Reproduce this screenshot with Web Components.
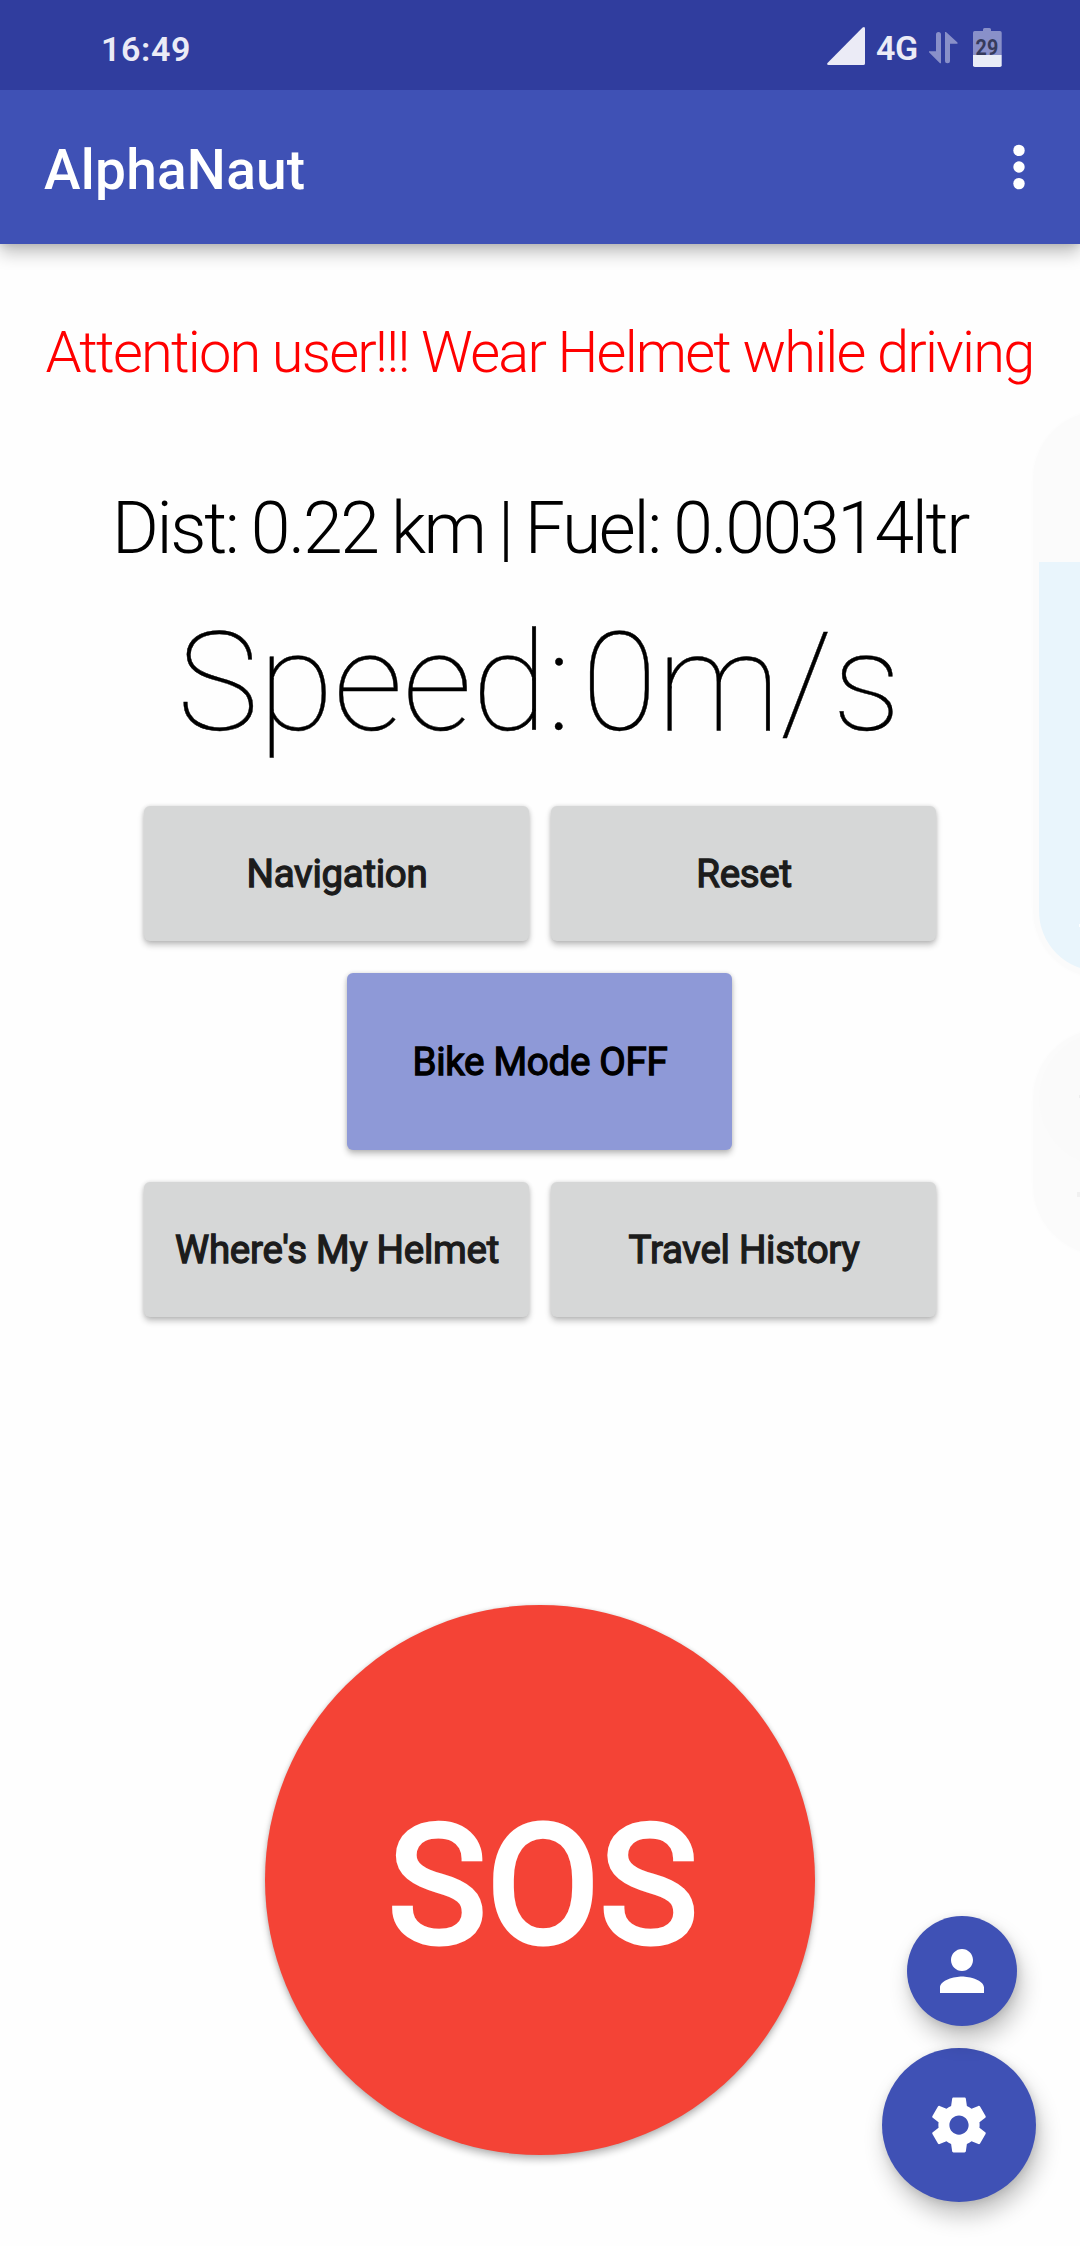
<!DOCTYPE html>
<html lang="en">
<head>
<meta charset="utf-8">
<title>AlphaNaut</title>
<style>
html,body{margin:0;padding:0}
body{background:#fefefe;font-family:Roboto,"Liberation Sans",sans-serif}
</style>
</head>
<body>
<alpha-app></alpha-app>

<template id="status-bar">
<style>
:host{display:flex;position:relative;z-index:1;align-items:flex-start;justify-content:space-between;box-sizing:border-box;height:90px;padding:0 78px 0 101px;background:#303d9e;color:#ebebf6;font-weight:600;font-size:34px;line-height:40px}
.time{padding-top:28.5px;letter-spacing:.6px}
.right{display:flex;align-items:flex-start}
.net{padding-top:28px;margin-left:11px;letter-spacing:-.3px}
svg{display:block}
.signal{margin-top:27px}
.arrows{margin:32px 0 0 11px}
.battery{margin:28px 0 0 15px}
</style>
<span class="time">16:49</span>
<span class="right">
<svg class="signal" width="38" height="38" viewBox="0 0 38 38"><path fill="#ebebf6" d="M38 1.6V36.4Q38 38 36.4 38H1.6Q-.6 38 .5 36L35.6.6Q38-.8 38 1.6Z"/></svg>
<span class="net">4G</span>
<svg class="arrows" width="29" height="32" viewBox="0 0 29 32"><path fill="#8990c9" d="M7 2.5Q7 0 9.5 0T12 2.5V31.2H11L0 20.3V19.3H7Z"/><path fill="#8990c9" d="M16 0H17L28.5 10.5V11.7H21V28.7Q21 31.2 18.5 31.2T16 28.7Z"/></svg>
<svg class="battery" width="29" height="39" viewBox="0 0 29 39"><path fill="#8990c9" d="M10 3V1.5Q10 0 11.5 0H16.5Q18 0 18 1.5V3H27Q28.7 3 28.7 4.7V27H0V4.7Q0 3 1.7 3Z"/><path fill="#e9edf7" d="M0 27H28.7V37.2Q28.7 39 26.9 39H1.8Q0 39 0 37.2Z"/><text x="2.6" y="27" textLength="22.6" lengthAdjust="spacingAndGlyphs" font-family="Roboto" font-size="22" font-weight="700" fill="#363b5c">29</text></svg>
</span>
</template>

<template id="app-toolbar">
<style>
:host{display:flex;position:relative;align-items:center;justify-content:space-between;box-sizing:border-box;height:154px;padding:0 55px 0 44px;background:#3f51b5;color:#fff;box-shadow:0 9px 16px rgba(0,0,0,.24),0 1px 8px rgba(0,0,0,.12)}
h1{margin:5px 0 0;font-size:55px;font-weight:500;line-height:64px;letter-spacing:.25px}
svg{display:block}
</style>
<h1><slot></slot></h1>
<svg width="12" height="46" viewBox="0 0 12 46" fill="#fff"><circle cx="6" cy="6.4" r="5.7"/><circle cx="6" cy="23" r="5.7"/><circle cx="6" cy="39.6" r="5.7"/></svg>
</template>

<template id="action-button">
<style>
:host{display:flex;align-items:center;justify-content:center;box-sizing:border-box;width:385px;height:135px;padding:2px 0 0 1px;border-radius:6px;background:#d6d7d7;color:#1c1c1c;font-size:38.5px;line-height:48px;white-space:nowrap;letter-spacing:-.28px;-webkit-text-stroke:1.3px currentColor;box-shadow:0 4px 6px rgba(0,0,0,.24),0 0 4px rgba(0,0,0,.12)}
:host([mode]){height:177px;margin-right:1px;background:#8e99d7;color:#000}
</style>
<slot></slot>
</template>

<template id="sos-button">
<style>
:host{display:flex;align-items:center;justify-content:center;box-sizing:border-box;width:550px;height:550px;padding:12px 0 0 6px;border-radius:50%;background:#f44336;color:#fff;font-size:165px;line-height:194px;-webkit-text-stroke:5.2px #fff;box-shadow:0 5px 7px rgba(0,0,0,.24),0 0 4px rgba(0,0,0,.12)}
</style>
<slot></slot>
</template>

<template id="round-fab">
<style>
:host{display:flex;align-items:center;justify-content:center;position:relative;width:154px;height:154px;border-radius:50%;background:#3f51b5;box-shadow:4px 14px 22px rgba(0,0,0,.23),1px 2px 8px rgba(0,0,0,.12)}
:host([mini]){width:110px;height:110px;z-index:1}
</style>
<slot></slot>
</template>

<template id="edge-panel">
<style>
:host{position:absolute;top:404px;right:0;width:55px;height:860px;overflow:hidden}
div{position:absolute;box-sizing:border-box}
.volume{left:8px;top:7px;width:140px;height:567px;border-radius:68px;background:#fbfbfb;box-shadow:0 0 4px #fcfcfc}
.level{left:14px;top:158px;width:126px;height:409px;border-radius:0 0 60px 60px;background:#e9f5fc}
.tools{left:8px;top:625px;width:150px;height:226px;border-radius:70px;background:#fbfbfb;box-shadow:0 0 4px #fcfcfc}
.knob{left:14px;top:628px;width:134px;height:134px;border-radius:50%;background:#fafafa}
.dot{right:0;width:1px;height:3px}
</style>
<div class="volume"></div><div class="level"></div><div class="dot" style="top:520px;background:#fff"></div>
<div class="tools"></div><div class="knob"></div>
<div class="dot" style="top:691px;background:#eee"></div><div class="dot" style="top:788px;width:3px;height:5px;background:#f1f1f1"></div>
</template>

<template id="alpha-app">
<style>
:host{display:flex;flex-direction:column;position:relative;width:1080px;height:2246px;overflow:hidden;background:#fefefe}
main{display:flex;flex-direction:column;align-items:center;padding-top:74px}
p{margin:0;white-space:pre;color:#000}
.warn{margin-right:1px;font-size:57.75px;font-weight:300;line-height:68px;letter-spacing:-1.78px;color:#f00}
.trip{margin:100.6px 0 0 0;font-size:71.5px;font-weight:300;line-height:84px;letter-spacing:-2.35px;word-spacing:-1.7px}
.speed{margin:32.4px 2px 0 0;font-size:137.5px;font-weight:100;line-height:160px;letter-spacing:-.1px;word-spacing:-22.5px;-webkit-text-stroke:.4px #000}
.grid{display:flex;flex-direction:column;align-items:center;gap:32px;margin-top:43px}
.row{display:flex;gap:22px}
sos-button{margin-top:288px}
.fabs{position:absolute;right:44px;bottom:44px;display:flex;flex-direction:column;align-items:center;gap:22px}
.fabs round-fab[mini]{margin-left:6px}
</style>
<status-bar></status-bar>
<app-toolbar>AlphaNaut</app-toolbar>
<main>
<p class="warn">Attention user!!! Wear Helmet while driving</p>
<p class="trip">Dist: 0.22 km | Fuel: 0.00314ltr</p>
<p class="speed">Speed: 0m/s</p>
<div class="grid">
<div class="row"><action-button>Navigation</action-button><action-button>Reset</action-button></div>
<action-button mode>Bike Mode OFF</action-button>
<div class="row"><action-button>Where's My Helmet</action-button><action-button>Travel History</action-button></div>
</div>
<sos-button>SOS</sos-button>
</main>
<edge-panel></edge-panel>
<div class="fabs">
<round-fab mini><svg width="66" height="66" viewBox="0 0 24 24" fill="#fff"><path d="M12 12c2.21 0 4-1.79 4-4s-1.79-4-4-4-4 1.79-4 4 1.79 4 4 4zm0 2c-2.67 0-8 1.34-8 4v2h16v-2c0-2.66-5.33-4-8-4z"/></svg></round-fab>
<round-fab><svg width="66" height="66" viewBox="0 0 24 24" fill="#fff"><path d="M19.43 12.98c.04-.32.07-.64.07-.98s-.03-.66-.07-.98l2.11-1.65c.19-.15.24-.42.12-.64l-2-3.46c-.12-.22-.39-.3-.61-.22l-2.49 1c-.52-.4-1.08-.73-1.69-.98l-.38-2.65C14.46 2.18 14.25 2 14 2h-4c-.25 0-.46.18-.49.42l-.38 2.65c-.61.25-1.17.59-1.69.98l-2.49-1c-.23-.09-.49 0-.61.22l-2 3.46c-.13.22-.07.49.12.64l2.11 1.65c-.04.32-.07.65-.07.98s.03.66.07.98l-2.11 1.65c-.19.15-.24.42-.12.64l2 3.46c.12.22.39.3.61.22l2.49-1c.52.4 1.08.73 1.69.98l.38 2.65c.03.24.24.42.49.42h4c.25 0 .46-.18.49-.42l.38-2.65c.61-.25 1.17-.59 1.69-.98l2.49 1c.23.09.49 0 .61-.22l2-3.46c.12-.22.07-.49-.12-.64l-2.11-1.65zM12 15.5c-1.93 0-3.5-1.57-3.5-3.5s1.57-3.5 3.5-3.5 3.5 1.57 3.5 3.5-1.57 3.5-3.5 3.5z"/></svg></round-fab>
</div>
</template>

<script>
for (const name of ['status-bar','app-toolbar','action-button','sos-button','round-fab','edge-panel','alpha-app']) {
  customElements.define(name, class extends HTMLElement {
    constructor() {
      super();
      this.attachShadow({mode:'open'}).append(document.getElementById(name).content.cloneNode(true));
    }
  });
}
</script>
</body>
</html>
